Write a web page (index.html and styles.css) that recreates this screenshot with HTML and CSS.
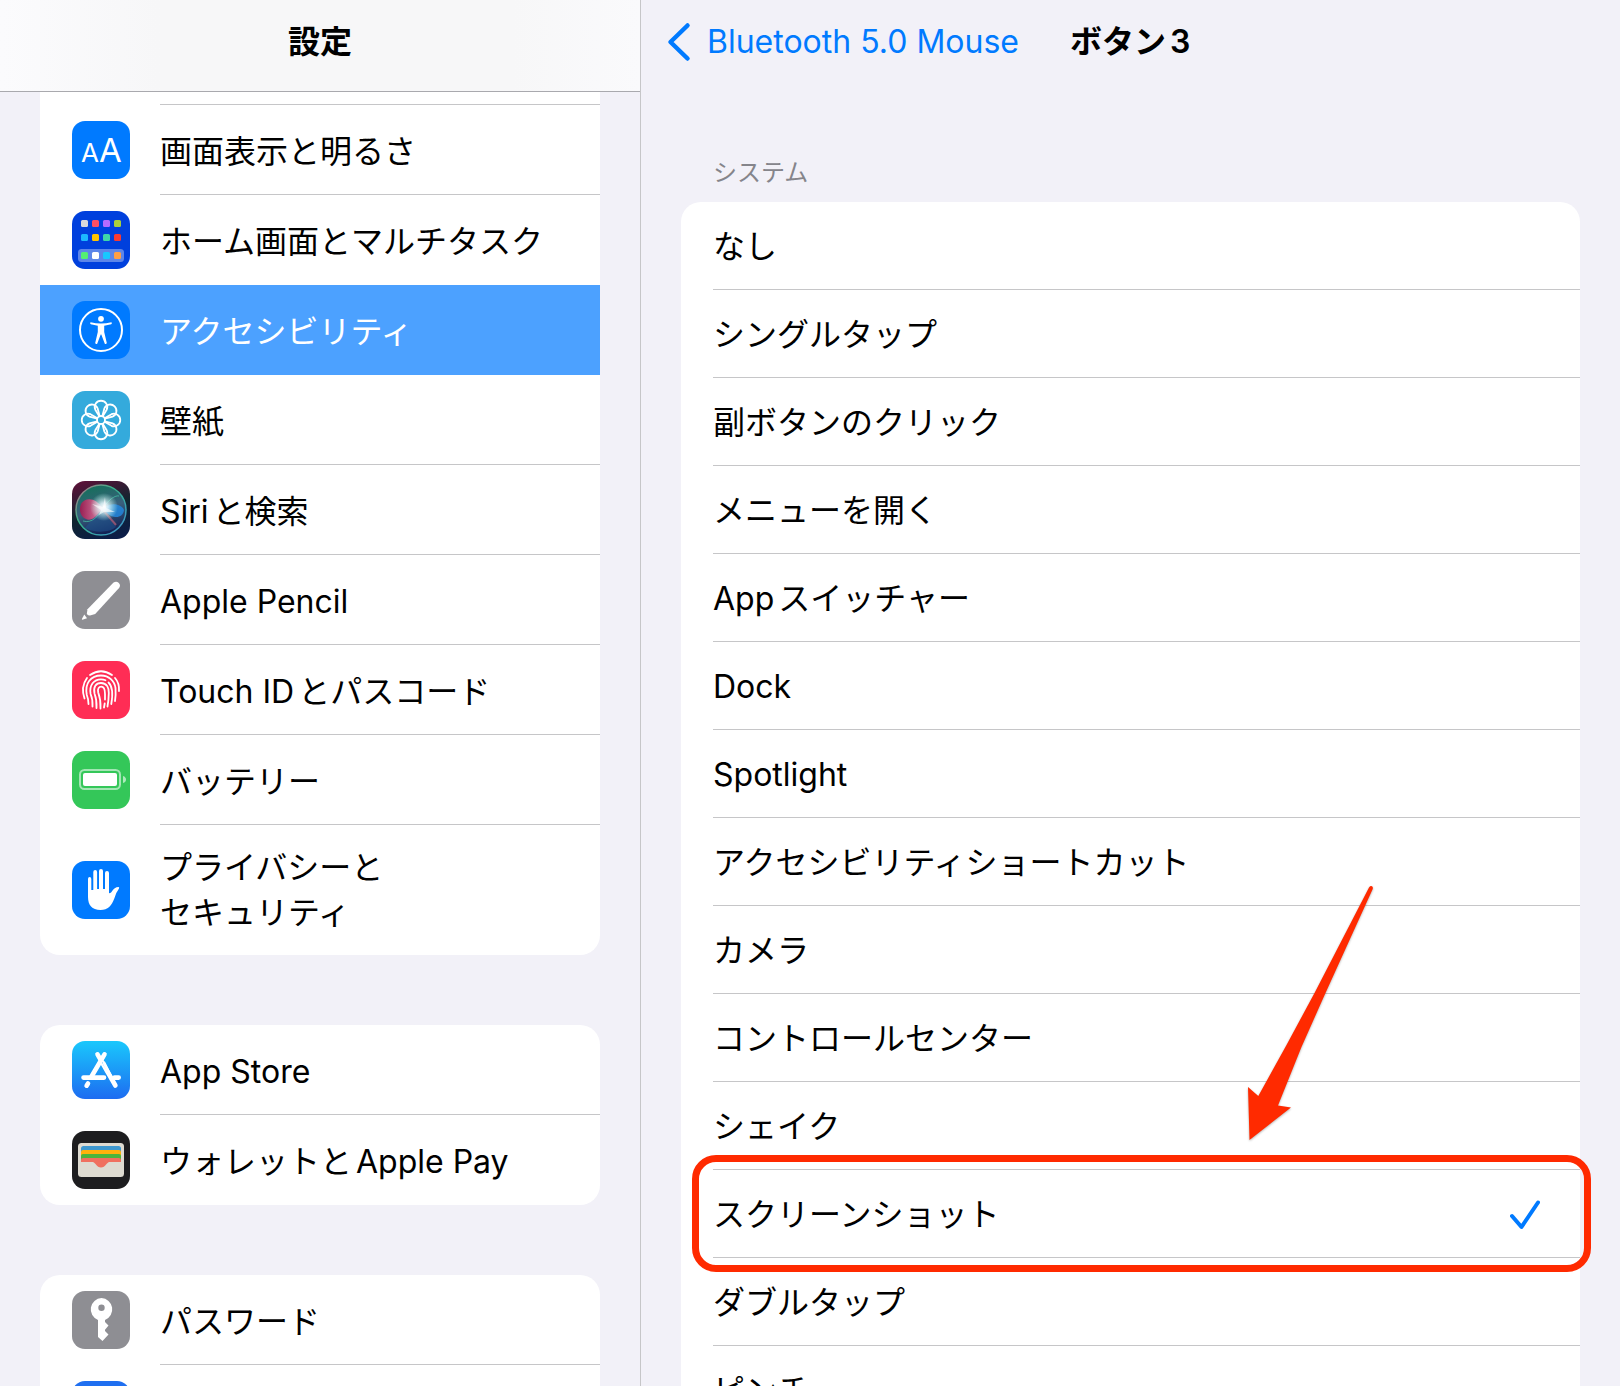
FILE: index.html
```html
<!DOCTYPE html>
<html lang="ja">
<head>
    <meta charset="UTF-8">
    <meta name="viewport" content="width=device-width, initial-scale=1.0">
    <title>設定</title>
    <link rel="stylesheet" href="styles.css">
</head>
<body>

    <svg class="defs" aria-hidden="true">
        <symbol id="check" viewBox="0 0 30 30">
            <path d="M2 16 L11.500 27 L28 2.500" fill="none" stroke="#007aff" stroke-width="4" stroke-linecap="round" stroke-linejoin="round"/>
        </symbol>
    </svg>

    <div class="screen">
        <div class="sidebar">
            <header class="sidebar-header">
                <h1>設定</h1>
            </header>
            <nav>
                <ul class="card card-scrolled">
                    <li class="row-cut"></li>
                    <li>
                        <a class="row" href="#display">
                            <svg class="icon icon-blue" viewBox="0 0 58 58" aria-hidden="true">
                                <text class="icon-letter-small" x="9" y="41">A</text>
                                <text class="icon-letter-large" x="27" y="41">A</text>
                            </svg>
                            <span class="label">画面表示と明るさ</span>
                        </a>
                    </li>
                    <li>
                        <a class="row" href="#home">
                            <svg class="icon icon-home" viewBox="0 0 58 58" aria-hidden="true">
                                <rect x="6" y="38" width="46" height="13" rx="3.500" fill="#fff" opacity=".36"/>
                                <rect x="9" y="9" width="7" height="7" rx="1.500" fill="#d8d8dc"/>
                                <rect x="20" y="9" width="7" height="7" rx="1.500" fill="#ff4f64"/>
                                <rect x="31" y="9" width="7" height="7" rx="1.500" fill="#b56bff"/>
                                <rect x="42" y="9" width="7" height="7" rx="1.500" fill="#a9d13a"/>
                                <rect x="9" y="23" width="7" height="7" rx="1.500" fill="#1cb8ff"/>
                                <rect x="20" y="23" width="7" height="7" rx="1.500" fill="#ffc400"/>
                                <rect x="31" y="23" width="7" height="7" rx="1.500" fill="#3fd6a8"/>
                                <rect x="42" y="23" width="7" height="7" rx="1.500" fill="#f93a32"/>
                                <rect x="9" y="41" width="7" height="7" rx="1.500" fill="#54f073"/>
                                <rect x="20" y="41" width="7" height="7" rx="1.500" fill="#fff"/>
                                <rect x="31" y="41" width="7" height="7" rx="1.500" fill="#18c8ff"/>
                                <rect x="42" y="41" width="7" height="7" rx="1.500" fill="#ff9f45"/>
                            </svg>
                            <span class="label">ホーム画面とマルチタスク</span>
                        </a>
                    </li>
                    <li>
                        <a class="row selected" href="#accessibility" aria-current="page">
                            <svg class="icon icon-blue" viewBox="0 0 58 58" aria-hidden="true">
                                <circle cx="29" cy="29" r="21" fill="none" stroke="#fff" stroke-width="2"/>
                                <circle cx="29" cy="17.800" r="2.900" fill="#fff"/>
                                <path d="M18.600 21.200 Q29 23.600 39.400 21.200 Q40.600 22.400 39.200 23.200 L32.200 24.800 L32.200 31 L34.800 42 Q34.200 43.600 32.800 42.700 L29.300 33.500 H28.700 L25.200 42.700 Q23.800 43.600 23.200 42 L25.800 31 L25.800 24.800 L18.800 23.200 Q17.400 22.400 18.600 21.200Z" fill="#fff"/>
                            </svg>
                            <span class="label">アクセシビリティ</span>
                        </a>
                    </li>
                    <li>
                        <a class="row" href="#wallpaper">
                            <svg class="icon icon-wallpaper" viewBox="0 0 58 58" aria-hidden="true">
                                <g fill="none" stroke="#fff" stroke-width="1.800">
                                    <circle cx="29" cy="29" r="4"/>
                                    <path id="petal" d="M27.300 25.400 L23.200 18.500 A6.300 6.300 0 1 1 34.800 18.500 L30.700 25.400"/>
                                    <use href="#petal" transform="rotate(45 29 29)"/>
                                    <use href="#petal" transform="rotate(90 29 29)"/>
                                    <use href="#petal" transform="rotate(135 29 29)"/>
                                    <use href="#petal" transform="rotate(180 29 29)"/>
                                    <use href="#petal" transform="rotate(225 29 29)"/>
                                    <use href="#petal" transform="rotate(270 29 29)"/>
                                    <use href="#petal" transform="rotate(315 29 29)"/>
                                </g>
                            </svg>
                            <span class="label">壁紙</span>
                        </a>
                    </li>
                    <li>
                        <a class="row" href="#siri">
                            <svg class="icon icon-siri" viewBox="0 0 58 58" aria-hidden="true">
                                <defs>
                                    <radialGradient id="siriGlow">
                                        <stop offset="0" stop-color="#fff"/>
                                        <stop offset=".3" stop-color="#e8fbff" stop-opacity=".85"/>
                                        <stop offset="1" stop-color="#bfe" stop-opacity="0"/>
                                    </radialGradient>
                                    <linearGradient id="siriRing" x1="0" y1="0" x2="1" y2="1">
                                        <stop offset="0" stop-color="#c06b86"/>
                                        <stop offset=".4" stop-color="#35b48a"/>
                                        <stop offset="1" stop-color="#3f8fd0"/>
                                    </linearGradient>
                                    <linearGradient id="siriOrb" x1=".3" y1="0" x2=".6" y2="1">
                                        <stop offset="0" stop-color="#14705a"/>
                                        <stop offset=".5" stop-color="#3a5f7c"/>
                                        <stop offset="1" stop-color="#101d52"/>
                                    </linearGradient>
                                    <linearGradient id="siriPink" x1="0" y1="0" x2="1" y2="0">
                                        <stop offset="0" stop-color="#a3184f"/>
                                        <stop offset="1" stop-color="#f58cb0"/>
                                    </linearGradient>
                                </defs>
                                <circle cx="29" cy="29" r="25" fill="url(#siriOrb)" stroke="url(#siriRing)" stroke-width="1.500"/>
                                <path d="M31 28 C24 16 13 16 9 23 C5 33 13 41 20 38 C26 36 28 32 31 28Z" fill="url(#siriPink)" opacity=".9"/>
                                <path d="M31 28 C38 20 50 23 52 29 C51 38 39 39 31 28Z" fill="#2386dc" opacity=".85"/>
                                <path d="M30 29 C22 36 16 43 13 47 C25 53 38 51 44 46Z" fill="#1d5796" opacity=".5"/>
                                <path d="M31 29 L44 44" stroke="#d36a80" stroke-width="2" opacity=".6"/>
                                <path d="M11 40 C20 43 27 34 31 28 C36 18 44 14 47 15" fill="none" stroke="#48c9a9" stroke-width="1" opacity=".7"/>
                                <circle cx="32" cy="26" r="14" fill="url(#siriGlow)"/>
                                <path d="M20 23 L31 26 L33 16 L34 27 L43 31 L32 31 L27 34 L29 29Z" fill="#fff" opacity=".6"/>
                            </svg>
                            <span class="label">Siriと検索</span>
                        </a>
                    </li>
                    <li>
                        <a class="row" href="#pencil">
                            <svg class="icon icon-gray" viewBox="0 0 58 58" aria-hidden="true">
                                <path d="M41.300 11.800 Q44.300 9.500 46.800 12 Q49.200 14.600 46.800 17.300 L23.200 43 L18 44.600 Q16.300 44.700 14.800 43 L15.500 38.200Z" fill="#fff"/>
                                <path d="M12.300 43.600 L15 47.200 L10.400 48.800 Q9.600 48.800 10 47.800Z" fill="#fff"/>
                            </svg>
                            <span class="label">Apple Pencil</span>
                        </a>
                    </li>
                    <li>
                        <a class="row" href="#touchid">
                            <svg class="icon icon-red" viewBox="0 0 58 58" aria-hidden="true">
                                <g fill="none" stroke="#fff" stroke-width="1.800" stroke-linecap="round">
                                    <path d="M18 14 Q29 6.500 40 14"/>
                                    <path d="M12.500 37.500 Q8.500 26 15 17"/>
                                    <path d="M43 17 Q47.500 22 47 30"/>
                                    <path d="M16.500 43 Q16.500 38 14.800 34 C12.500 22 19 14.500 29 14.500 C37 14.500 42.500 20 43.500 27 Q44 34 43 40"/>
                                    <path d="M20.500 45.500 Q20.800 38 18.600 33 C17 24 22 18.300 29 18.300 Q31.500 18.300 33.500 19.200"/>
                                    <path d="M36.500 21.500 C41.500 26 40.500 36 39.300 43"/>
                                    <path d="M24.500 47 Q25 39 22.500 32.500 C21 26 24 22 29 22 C35 22 37 27 36.800 32 Q36.700 39 35.500 45.500"/>
                                    <path d="M28.500 47.500 Q29 39 26.200 31.500 C25.300 27.500 27 25.700 29.200 25.700 C32.500 25.700 33 30 33 33 V38.500"/>
                                    <path d="M32.700 42.500 L32 46.500"/>
                                </g>
                            </svg>
                            <span class="label">Touch IDとパスコード</span>
                        </a>
                    </li>
                    <li>
                        <a class="row" href="#battery">
                            <svg class="icon icon-green" viewBox="0 0 58 58" aria-hidden="true">
                                <rect x="8" y="19" width="40" height="19" rx="4.500" fill="none" stroke="#fff" stroke-width="2" opacity=".55"/>
                                <rect x="11" y="22" width="34" height="13" rx="2" fill="#fff"/>
                                <path d="M51 25 Q54 26 54 28.500 Q54 31 51 32Z" fill="#fff" opacity=".6"/>
                            </svg>
                            <span class="label">バッテリー</span>
                        </a>
                    </li>
                    <li>
                        <a class="row row-tall" href="#privacy">
                            <svg class="icon icon-blue" viewBox="0 0 58 58" aria-hidden="true">
                                <path d="M16 18 Q16 16 17.600 16 Q19.300 16 19.300 18 V29 H21.300 V11 Q21.300 9 23.200 9 Q25.100 9 25.100 11 V28 H27 V10 Q27 8 29 8 Q31 8 31 10 V28 H33 V12 Q33 10 35 10 Q37 10 37 12 V32 Q38.500 32.500 39.500 31 Q42.500 26 46.500 26 Q47.600 26.300 47 27.500 Q44 31.500 42.500 37 C39.500 45 36 49 28.500 49 C20 49 16 44 16 36Z" fill="#fff"/>
                            </svg>
                            <span class="label">プライバシーと<br>セキュリティ</span>
                        </a>
                    </li>
                </ul>

                <ul class="card">
                    <li>
                        <a class="row" href="#appstore">
                            <svg class="icon icon-store" viewBox="0 0 58 58" aria-hidden="true">
                                <g fill="none" stroke="#fff" stroke-width="4.600" stroke-linecap="round">
                                    <path d="M32.500 13.300 L19.500 35.500"/>
                                    <path d="M25.500 13.300 L43.400 44.500"/>
                                    <path d="M11.500 36.600 H32 M42.500 36.600 H46.700"/>
                                    <path d="M16 42.500 L14.600 44.700"/>
                                </g>
                                <path d="M30.500 21.500 L39 36" stroke="#1b9cf7" stroke-width="1"/>
                                <path d="M31.500 21 L43.400 44.500" stroke="#fff" stroke-width="3"/>
                            </svg>
                            <span class="label">App Store</span>
                        </a>
                    </li>
                    <li>
                        <a class="row" href="#wallet">
                            <svg class="icon icon-wallet" viewBox="0 0 58 58" aria-hidden="true">
                                <rect x="6" y="12" width="46" height="34" rx="3.500" fill="#dedbd1"/>
                                <path d="M9 31 V17.500 Q9 15 11.500 15 H46.500 Q49 15 49 17.500 V31Z" fill="#3e98cf"/>
                                <path d="M9 31 V21 Q9 19 11 19 H47 Q49 19 49 21 V31Z" fill="#ffb20c"/>
                                <path d="M9 31 V25 Q9 23 11 23 H47 Q49 23 49 25 V31Z" fill="#4bb53c"/>
                                <path d="M9 31 V29 Q9 27 11 27 H47 Q49 27 49 29 V31Z" fill="#f0705f"/>
                                <path d="M20 30.500 H38 Q36 31 34.500 33 Q32 36.500 29 36.500 Q26 36.500 23.500 33 Q22 31 20 30.500Z" fill="#f0705f"/>
                            </svg>
                            <span class="label">ウォレットとApple Pay</span>
                        </a>
                    </li>
                </ul>

                <ul class="card">
                    <li>
                        <a class="row" href="#passwords">
                            <svg class="icon icon-gray" viewBox="0 0 58 58" aria-hidden="true">
                                <path fill-rule="evenodd" d="M29.500 7 A11.400 11.400 0 0 1 33 29 V31 L36.500 34.500 L33 38.800 V40 L36.500 43.500 L30.500 50 L26 46 V29 A11.400 11.400 0 0 1 29.500 7Z M29.500 13.500 A3.200 3.200 0 1 0 29.500 19.900 A3.200 3.200 0 1 0 29.500 13.500Z" fill="#fff"/>
                            </svg>
                            <span class="label">パスワード</span>
                        </a>
                    </li>
                    <li>
                        <a class="row" href="#mail" aria-label="メール">
                            <svg class="icon icon-mail" viewBox="0 0 58 58" aria-hidden="true"></svg>
                            <span class="label"></span>
                        </a>
                    </li>
                </ul>
            </nav>
        </div>

        <main class="detail">
            <header class="detail-header">
                <a class="back" href="#mouse">
                    <svg class="chevron" viewBox="0 0 24 40" aria-hidden="true">
                        <path d="M20.500 3.500 L3.500 20 L20.500 36.500" fill="none" stroke="#007aff" stroke-width="4.500" stroke-linecap="round" stroke-linejoin="round"/>
                    </svg>
                    Bluetooth 5.0 Mouse
                </a>
                <h2>ボタン3</h2>
            </header>

            <fieldset class="options">
                <legend>システム</legend>
                <div class="card">
                    <label class="option"><input type="radio" name="action"><span>なし</span><svg class="check"><use href="#check"/></svg></label>
                    <label class="option"><input type="radio" name="action"><span>シングルタップ</span><svg class="check"><use href="#check"/></svg></label>
                    <label class="option"><input type="radio" name="action"><span>副ボタンのクリック</span><svg class="check"><use href="#check"/></svg></label>
                    <label class="option"><input type="radio" name="action"><span>メニューを開く</span><svg class="check"><use href="#check"/></svg></label>
                    <label class="option"><input type="radio" name="action"><span>Appスイッチャー</span><svg class="check"><use href="#check"/></svg></label>
                    <label class="option"><input type="radio" name="action"><span>Dock</span><svg class="check"><use href="#check"/></svg></label>
                    <label class="option"><input type="radio" name="action"><span>Spotlight</span><svg class="check"><use href="#check"/></svg></label>
                    <label class="option"><input type="radio" name="action"><span>アクセシビリティショートカット</span><svg class="check"><use href="#check"/></svg></label>
                    <label class="option"><input type="radio" name="action"><span>カメラ</span><svg class="check"><use href="#check"/></svg></label>
                    <label class="option"><input type="radio" name="action"><span>コントロールセンター</span><svg class="check"><use href="#check"/></svg></label>
                    <label class="option"><input type="radio" name="action"><span>シェイク</span><svg class="check"><use href="#check"/></svg></label>
                    <div class="highlighted">
                        <label class="option"><input type="radio" name="action" checked><span>スクリーンショット</span><svg class="check"><use href="#check"/></svg></label>
                        <div class="highlight-box"></div>
                        <svg class="arrow" viewBox="0 0 140 270" aria-hidden="true">
                            <path d="M129 7.500 Q130.500 5.500 132 6.300 Q133.500 7.500 132.500 9.500 L85.500 113 L61.500 167 L38 225.500 L51 227.500 L9.500 260 L8 207 L18.300 216 L46.500 165 L74.500 113Z" fill="#ff2a00"/>
                        </svg>
                    </div>
                    <label class="option"><input type="radio" name="action"><span>ダブルタップ</span><svg class="check"><use href="#check"/></svg></label>
                    <label class="option"><input type="radio" name="action"><span>ピンチ</span><svg class="check"><use href="#check"/></svg></label>
                </div>
            </fieldset>
        </main>
    </div>

</body>
</html>
```

FILE: styles.css
```css
* {
    box-sizing: border-box;
}
body {
    margin: 0;
    font-family: Inter, "Noto Sans CJK JP", sans-serif;
    font-size: 32px;
    font-weight: 400;
    line-height: 45px;
    text-autospace: normal;
    background-color: #f2f1f8;
    color: #000;
}
h1, h2 {
    margin: 0;
    font-size: 32px;
    font-weight: 600;
}
ul {
    list-style: none;
    margin: 0;
    padding: 0;
}
a {
    color: inherit;
    text-decoration: none;
}
.defs {
    display: none;
}
.screen {
    display: grid;
    grid-template-columns: 32fr 49fr;
    height: 100vh;
    overflow: hidden;
}

/* Sidebar */
.sidebar {
    min-width: 0;
}
.sidebar-header {
    display: flex;
    justify-content: center;
    padding: 19px 0 27px;
    border-bottom: 1px solid #a9a9ae;
    background: linear-gradient(90deg, #fbfbfd, #f7f7f8 25%, #f7f7f8 80%, #fafafc);
}
.card {
    border-radius: 20px;
    background-color: #fff;
    overflow: hidden;
}
.sidebar .card {
    margin: 0 40px 70px;
}
.card-scrolled {
    border-top-left-radius: 0;
    border-top-right-radius: 0;
}
.row-cut {
    height: 13px;
    margin-left: 120px;
    border-bottom: 1px solid #c6c6c8;
}
.row {
    display: flex;
    align-items: center;
    gap: 30px;
    padding-left: 32px;
}
.label {
    flex: 1;
    padding: 24px 0 20px;
    min-height: 90px;
    border-bottom: 1px solid #c6c6c8;
}
.row-tall .label {
    padding-bottom: 15px;
}
.row-tall .label {
    padding: 20px 0 19px;
}
li:last-child .label,
li:has(+ li .selected) .label,
.selected .label {
    border-bottom-color: transparent;
}
.selected {
    background-color: #4ca1ff;
    color: #fff;
}

/* Icons */
.icon {
    flex: none;
    width: 58px;
    height: 58px;
    border-radius: 13px;
}
.icon-blue {
    background-color: #007aff;
}
.icon-home {
    background-color: #0040dd;
}
.icon-wallpaper {
    background-color: #34aadc;
}
.icon-siri {
    background: linear-gradient(160deg, #5a1238 5%, #10252f 50%, #0b1c4d);
}
.icon-gray {
    background-color: #8e8e93;
}
.icon-red {
    background-color: #ff2d55;
}
.icon-green {
    background-color: #34c759;
}
.icon-store {
    background: linear-gradient(#1ac8fc, #1d6cf1);
}
.icon-wallet {
    background-color: #1d1d1f;
}
.icon-mail {
    background-color: #1f6ff0;
}
.icon-letter-small,
.icon-letter-large {
    font-size: 26px;
    fill: #fff;
}
.icon-letter-large {
    font-size: 33px;
}

/* Detail pane */
.detail {
    min-width: 0;
    border-left: 1px solid #c6c6c8;
}
.detail-header {
    display: flex;
    align-items: center;
    gap: 51px;
    padding: 19px 26px 17px;
}
.back {
    display: flex;
    align-items: center;
    gap: 16px;
    color: #007aff;
}
.chevron {
    width: 24px;
    height: 40px;
}
.options {
    margin: 0;
    padding: 74px 40px 0;
    border: 0;
}
.options legend {
    float: left;
    width: 100%;
    padding: 0 32px 11px;
    font-size: 24px;
    line-height: 36px;
    color: #85858b;
}
.options .card {
    clear: both;
    overflow: visible;
}
.option {
    display: flex;
    align-items: center;
    justify-content: space-between;
    margin-left: 32px;
    padding: 22px 40px 20px 0;
    border-bottom: 1px solid #c6c6c8;
}
.option input {
    appearance: none;
    width: 0;
    height: 0;
    margin: 0;
}
.option span {
    flex: 1;
}
.check {
    width: 30px;
    height: 30px;
    visibility: hidden;
}
.option input:checked ~ .check {
    visibility: visible;
}

/* Red marker over the chosen option */
.highlighted {
    position: relative;
}
.highlight-box {
    position: absolute;
    inset: -15px -11px -14px 11px;
    border: 7px solid #ff2a00;
    border-radius: 24px;
    pointer-events: none;
}
.arrow {
    position: absolute;
    right: 200px;
    bottom: calc(100% + 20px);
    width: 140px;
    height: 270px;
    filter: drop-shadow(0 1px 1px rgba(0,0,0,0.3));
    pointer-events: none;
}
```
